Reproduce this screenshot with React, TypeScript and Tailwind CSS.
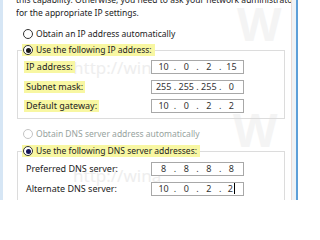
import React from "react";

function Radio({ checked, disabled, dark }: { checked?: boolean; disabled?: boolean; dark?: boolean }) {
  return (
    <span
      className={`flex h-[10px] w-[10px] shrink-0 items-center justify-center rounded-full border bg-white ${
        disabled ? "border-[#c4c4c4]" : "border-[#333333]"
      }`}
    >
      {checked && <span className={`h-[5px] w-[5px] rounded-full ${dark ? "bg-[#14145a]" : "bg-[#1a1a1a]"}`} />}
    </span>
  );
}

function IpInput({ parts, caret }: { parts: string[]; caret?: boolean }) {
  return (
    <div className="flex h-[14px] w-[93px] shrink-0 items-center border border-[#a8a8a8] bg-white px-[3px] text-[9px] text-[#333]">
      {parts.map((p, i) => (
        <React.Fragment key={i}>
          {i > 0 && <span className="w-[5.5px] text-center">.</span>}
          <span className="flex w-[17.5px] items-center justify-center">
            {p}
            {caret && i === 3 && <span className="ml-[1px] inline-block h-[11px] w-[1px] bg-black" />}
          </span>
        </React.Fragment>
      ))}
    </div>
  );
}

function FieldRow({ label, parts, hl, caret }: { label: string; parts: string[]; hl?: boolean; caret?: boolean }) {
  return (
    <div className="flex h-[14px] items-center">
      <div className="w-[133px] shrink-0 pl-[6px]">
        <span className={`flex h-[12px] w-fit items-center px-[2px] text-[9px] ${hl ? "bg-[#f8f7a2]" : ""}`}>{label}</span>
      </div>
      <IpInput parts={parts} caret={caret} />
    </div>
  );
}

export default function App() {
  return (
    <div className="relative flex h-[200px] w-[300px] overflow-hidden bg-white font-['Noto_Sans',sans-serif] text-[8.5px] text-[#222]">
      <div className="w-[3px] shrink-0 bg-[#d6e6f5]" />
      <div className="relative w-[288px] shrink-0 pl-[13px]">
        {/* watermarks */}
        <div className="pointer-events-none absolute left-[70px] top-[59px] whitespace-nowrap text-[17px] leading-none text-[#eeeeee]">
          http://wina
        </div>
        <div className="pointer-events-none absolute left-[70px] top-[167px] whitespace-nowrap text-[17px] leading-none text-[#eeeeee]">
          http://wina
        </div>
        <div className="pointer-events-none absolute left-[234px] top-[0px] text-[46px] font-bold leading-none text-[#f4f4f4]">
          W
        </div>
        <div className="pointer-events-none absolute left-[230px] top-[106px] text-[46px] font-bold leading-none text-[#f4f4f4]">
          W
        </div>

        <div className="relative flex flex-col">
          <div className="mt-[-7px] overflow-hidden whitespace-nowrap leading-[13px]">
            <div>this capability. Otherwise, you need to ask your network administrator</div>
            <div>for the appropriate IP settings.</div>
          </div>

          <div className="ml-[7px] mt-[9px] flex h-[12px] items-center gap-[3px]">
            <Radio />
            <span>Obtain an IP address automatically</span>
          </div>

          <div className="relative z-10 ml-[6px] mt-[4px] flex h-[12px] w-fit items-center gap-[3px] bg-[#f8f7a2] pl-[1px] pr-[3px]">
            <Radio checked />
            <span>Use the following IP address:</span>
          </div>

          <div className="ml-[1px] mt-[-6px] flex w-[268px] flex-col gap-[5.5px] border border-[#dcdcdc] pb-[5px] pt-[9px]">
            <FieldRow label="IP address:" parts={["10", "0", "2", "15"]} hl />
            <FieldRow label="Subnet mask:" parts={["255", "255", "255", "0"]} hl />
            <FieldRow label="Default gateway:" parts={["10", "0", "2", "2"]} hl />
          </div>

          <div className="ml-[7px] mt-[9px] flex h-[12px] items-center gap-[3px] text-[#97a39e]">
            <Radio disabled />
            <span>Obtain DNS server address automatically</span>
          </div>

          <div className="relative z-10 ml-[6px] mt-[5px] flex h-[12px] w-fit items-center gap-[3px] bg-[#f8f7a2] pl-[1px] pr-[3px]">
            <Radio checked dark />
            <span>Use the following DNS server addresses:</span>
          </div>

          <div className="ml-[1px] mt-[-6px] flex w-[268px] flex-col gap-[5.5px] border border-[#dcdcdc] pb-[5px] pt-[10px]">
            <FieldRow label="Preferred DNS server:" parts={["8", "8", "8", "8"]} />
            <FieldRow label="Alternate DNS server:" parts={["10", "0", "2", "2"]} caret />
          </div>
        </div>
      </div>
      <div className="w-[1px] shrink-0 bg-[#eadbd6]" />
      <div className="w-[4px] shrink-0 bg-[#eef2f6]" />
      <div className="w-[2px] shrink-0 bg-[#5d9fd8]" />
      <div className="flex-1 bg-white" />
    </div>
  );
}
